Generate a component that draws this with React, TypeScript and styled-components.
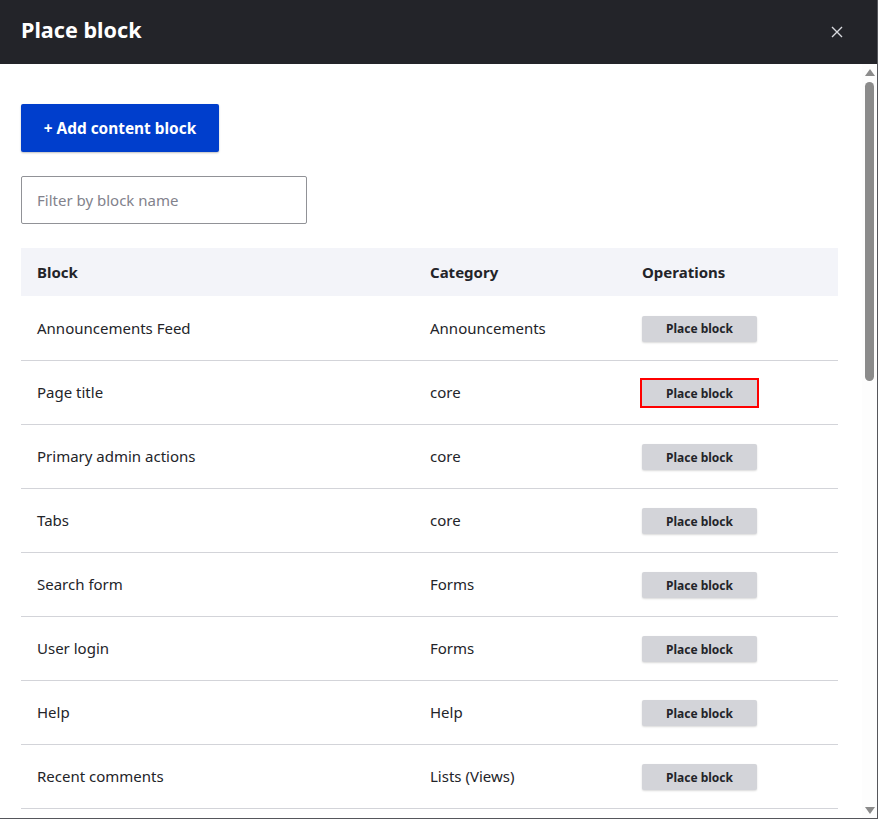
import React from "react";
import styled, { createGlobalStyle } from "styled-components";

const rows = [
  ["Announcements Feed", "Announcements"],
  ["Page title", "core"],
  ["Primary admin actions", "core"],
  ["Tabs", "core"],
  ["Search form", "Forms"],
  ["User login", "Forms"],
  ["Help", "Help"],
  ["Recent comments", "Lists (Views)"],
];

export default function App() {
  return (
    <>
      <GlobalStyle />
      <Dialog>
        <Header>
          <Title>Place block</Title>
          <CloseButton aria-label="Close">
            <svg width="12" height="12" viewBox="0 0 12 12">
              <path d="M1 1l10 10M11 1L1 11" stroke="#d8d9de" strokeWidth="1.4" fill="none" />
            </svg>
          </CloseButton>
        </Header>
        <Body>
          <AddButton>+ Add content block</AddButton>
          <FilterInput placeholder="Filter by block name" />
          <Table>
            <thead>
              <tr>
                <HeadCell>Block</HeadCell>
                <HeadCell>Category</HeadCell>
                <HeadCell>Operations</HeadCell>
              </tr>
            </thead>
            <tbody>
              {rows.map(([name, category], i) => (
                <Row key={name}>
                  <Cell>{name}</Cell>
                  <Cell>{category}</Cell>
                  <ActionCell>
                    <PlaceButton $marked={i === 1}>Place block</PlaceButton>
                  </ActionCell>
                </Row>
              ))}
            </tbody>
          </Table>
        </Body>
        <ScrollTrack>
          <ArrowUp />
          <Thumb />
          <ArrowDown />
        </ScrollTrack>
      </Dialog>
    </>
  );
}

const GlobalStyle = createGlobalStyle`
  html, body {
    margin: 0;
    height: 100%;
    overflow: hidden;
    background: #fff;
  }
  * {
    box-sizing: border-box;
  }
`;

const Dialog = styled.div`
  position: relative;
  width: 878px;
  height: 819px;
  overflow: hidden;
  display: flex;
  flex-direction: column;
  background: #fff;
  color: #232429;
  font-family: "Noto Sans", "Open Sans", sans-serif;
  border-right: 1px solid #55565b;
  border-bottom: 1px solid #55565b;
`;

const Header = styled.header`
  flex: none;
  height: 64px;
  display: flex;
  align-items: center;
  justify-content: space-between;
  padding: 0 34px 6px 21px;
  background: #232429;
`;

const Title = styled.h1`
  margin: 0;
  font-size: 21.6px;
  font-weight: 700;
  color: #fff;
`;

const CloseButton = styled.button`
  display: flex;
  padding: 0;
  margin-top: 6px;
  border: 0;
  background: none;
`;

const Body = styled.div`
  flex: 1;
  min-height: 0;
  overflow: hidden;
  padding: 40px 39px 0 21px;
  display: flex;
  flex-direction: column;
  align-items: flex-start;
`;

const AddButton = styled.button`
  flex: none;
  width: 198px;
  height: 48px;
  padding: 0;
  border: 0;
  border-radius: 2px;
  background: #003ecc;
  color: #fff;
  font: 700 15.4px "Noto Sans", "Open Sans", sans-serif;
  box-shadow: 0 1px 2px rgba(0, 0, 0, 0.25);
`;

const FilterInput = styled.input`
  flex: none;
  width: 286px;
  height: 48px;
  margin-top: 24px;
  padding: 0 15px;
  border: 1px solid #919297;
  border-radius: 2px;
  font: 400 15px "Noto Sans", "Open Sans", sans-serif;
  outline: none;
  &::placeholder {
    color: #82828c;
    opacity: 1;
  }
`;

const Table = styled.table`
  flex: none;
  width: 817px;
  margin-top: 24px;
  border-collapse: collapse;
  table-layout: fixed;
`;

const HeadCell = styled.th`
  height: 48px;
  padding: 0 16px;
  background: #f3f4f9;
  font-size: 15px;
  font-weight: 700;
  text-align: left;
  &:nth-child(1) {
    width: 393px;
  }
  &:nth-child(2) {
    width: 212px;
  }
`;

const Row = styled.tr`
  height: 64px;
  border-bottom: 1px solid #d3d4d9;
`;

const Cell = styled.td`
  padding: 0 16px;
  font-size: 15px;
`;

const ActionCell = styled(Cell)`
  padding-top: 2px;
`;

const PlaceButton = styled.button<{ $marked: boolean }>`
  display: block;
  width: 115px;
  height: 26px;
  padding: 0;
  border: 0;
  border-radius: ${(p) => (p.$marked ? "0" : "2px")};
  background: #d3d4d9;
  color: #232429;
  font: 700 12px "Noto Sans", "Open Sans", sans-serif;
  box-shadow: ${(p) => (p.$marked ? "0 0 0 2px #f00" : "0 1px 2px rgba(0, 0, 0, 0.15)")};
`;

const ScrollTrack = styled.div`
  position: absolute;
  top: 0;
  right: 0;
  bottom: 0;
  margin-top: 64px;
  width: 15px;
  background: #fdfdfd;
  display: flex;
  flex-direction: column;
  align-items: center;
`;

const ArrowUp = styled.div`
  flex: none;
  width: 0;
  height: 0;
  margin-top: 5px;
  border-left: 5px solid transparent;
  border-right: 5px solid transparent;
  border-bottom: 7px solid #8b8b8b;
`;

const Thumb = styled.div`
  flex: none;
  width: 9px;
  height: 299px;
  margin-top: 6px;
  border-radius: 5px;
  background: #8b8b8b;
`;

const ArrowDown = styled.div`
  flex: none;
  width: 0;
  height: 0;
  margin-top: auto;
  margin-bottom: 4px;
  border-left: 5px solid transparent;
  border-right: 5px solid transparent;
  border-top: 7px solid #8b8b8b;
`;
